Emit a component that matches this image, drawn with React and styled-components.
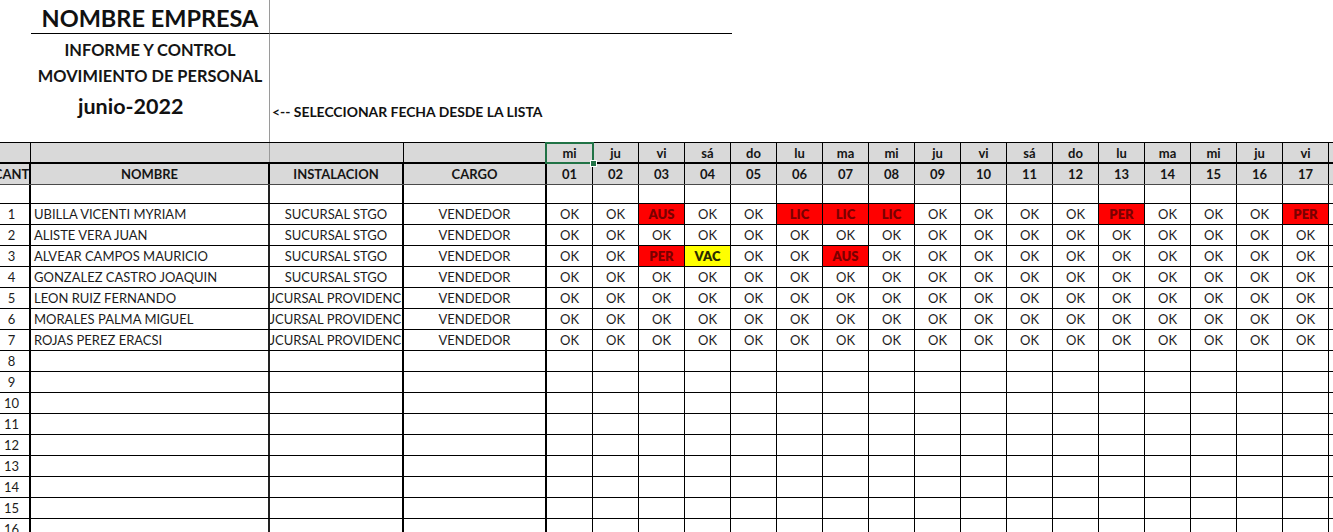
import React from 'react';
import styled, { createGlobalStyle } from 'styled-components';

const GlobalStyle = createGlobalStyle`
  html, body { margin: 0; padding: 0; background: #fff; }
  body {
    font-family: Lato, "Liberation Sans", sans-serif;
    color: #1a1a1a;
    overflow: hidden;
  }
`;

const COLS = '37px 239px 134px 143px repeat(18, 46px)';

const Page = styled.div`
  width: 1333px;
  height: 532px;
  overflow: hidden;
  background: #fff;
`;

const Canvas = styled.div`
  margin-left: -6px;
  width: max-content;
`;

/* ---------- top block ---------- */
const Top = styled.div`
  display: grid;
  grid-template-columns: 37px 239px 462px;
  grid-template-rows: 34px 28px 26px 54px;
`;

const Spacer = styled.div``;

const TitleCell = styled.div`
  box-sizing: border-box;
  border-bottom: 1px solid #000;
  border-right: 1px solid #9a9a9a;
  display: flex;
  align-items: center;
  justify-content: center;
  padding-top: 2px;
  font-weight: 700;
  font-size: 23.5px;
  color: #111;
  white-space: nowrap;
`;

const TitleLine = styled.div`
  box-sizing: border-box;
  border-bottom: 1px solid #000;
`;

const Subtitle = styled.div`
  box-sizing: border-box;
  border-right: 1px solid #9a9a9a;
  display: flex;
  align-items: center;
  justify-content: center;
  padding-top: ${p => p.$pt || 0}px;
  font-weight: 700;
  font-size: 16.4px;
  color: #151515;
  white-space: nowrap;
`;

const MonthCell = styled.div`
  box-sizing: border-box;
  border-right: 1px solid #9a9a9a;
  display: flex;
  align-items: flex-start;
  padding: 5px 0 0 47px;
  font-weight: 700;
  font-size: 21.5px;
  color: #111;
  white-space: nowrap;
`;

const Hint = styled.div`
  display: flex;
  align-items: flex-start;
  padding: 15px 0 0 2px;
  font-weight: 700;
  font-size: 13.9px;
  color: #111;
  white-space: nowrap;
`;

const Blank = styled.div``;

/* ---------- sheet ---------- */
const Row = styled.div`
  display: grid;
  grid-template-columns: ${COLS};
  height: ${p => p.$h}px;
  box-sizing: border-box;
  border-top: ${p => p.$top || 'none'};
  border-bottom: ${p => p.$bottom || '1px solid #000'};
  background: ${p => p.$bg || 'transparent'};
`;

const Cell = styled.div`
  box-sizing: border-box;
  position: relative;
  border-right: ${p => p.$rw ?? 1}px solid ${p => p.$rc || '#000'};
  display: flex;
  align-items: center;
  justify-content: center;
  overflow: hidden;
  white-space: nowrap;
  font-size: 13px;
  color: #1c1c1c;
`;

const HeadCell = styled(Cell)`
  font-weight: 700;
  color: #151515;
`;

const SelectedHead = styled(HeadCell)`
  overflow: visible;
  &::after {
    content: '';
    position: absolute;
    top: -1px;
    left: -2px;
    right: -2px;
    bottom: -2px;
    border: 2px solid #217346;
    pointer-events: none;
  }
  &::before {
    content: '';
    position: absolute;
    right: -5px;
    bottom: -5px;
    width: 5px;
    height: 5px;
    background: #217346;
    border: 1px solid #fff;
    z-index: 2;
  }
`;

const NameCell = styled(Cell)`
  justify-content: flex-start;
  padding-left: 3px;
`;

const StatusCell = styled(Cell)`
  background: ${p => (p.$kind === 'VAC' ? '#ffff00' : p.$kind === 'OK' || !p.$kind ? 'transparent' : '#ff0000')};
  color: ${p => (p.$kind === 'VAC' ? '#2a2a00' : p.$kind === 'OK' ? '#1c1c1c' : '#7a0000')};
  font-weight: ${p => (p.$kind && p.$kind !== 'OK' ? 800 : 400)};
`;

const WEEKDAYS = ['mi', 'ju', 'vi', 'sá', 'do', 'lu', 'ma', 'mi', 'ju', 'vi', 'sá', 'do', 'lu', 'ma', 'mi', 'ju', 'vi', 'sá'];
const DAYS = WEEKDAYS.map((_, i) => String(i + 1).padStart(2, '0'));

const EMPLOYEES = [
  { n: 1, name: 'UBILLA VICENTI MYRIAM', inst: 'SUCURSAL STGO', ex: { 3: 'AUS', 6: 'LIC', 7: 'LIC', 8: 'LIC', 13: 'PER', 17: 'PER' } },
  { n: 2, name: 'ALISTE VERA JUAN', inst: 'SUCURSAL STGO', ex: {} },
  { n: 3, name: 'ALVEAR CAMPOS MAURICIO', inst: 'SUCURSAL STGO', ex: { 3: 'PER', 4: 'VAC', 7: 'AUS' } },
  { n: 4, name: 'GONZALEZ CASTRO JOAQUIN', inst: 'SUCURSAL STGO', ex: {} },
  { n: 5, name: 'LEON RUIZ FERNANDO', inst: 'SUCURSAL PROVIDENCIA', ex: {} },
  { n: 6, name: 'MORALES PALMA MIGUEL', inst: 'SUCURSAL PROVIDENCIA', ex: {} },
  { n: 7, name: 'ROJAS PEREZ ERACSI', inst: 'SUCURSAL PROVIDENCIA', ex: {} },
];

const EMPTY = [8, 9, 10, 11, 12, 13, 14, 15, 16];

export default function App() {
  return (
    <Page>
      <GlobalStyle />
      <Canvas>
        <Top>
          <Spacer />
          <TitleCell>NOMBRE EMPRESA</TitleCell>
          <TitleLine />

          <Spacer />
          <Subtitle $pt={3}>INFORME Y CONTROL</Subtitle>
          <Blank />

          <Spacer />
          <Subtitle>MOVIMIENTO DE PERSONAL</Subtitle>
          <Blank />

          <Spacer />
          <MonthCell>junio-2022</MonthCell>
          <Hint>&lt;-- SELECCIONAR FECHA DESDE LA LISTA</Hint>
        </Top>

        <Row $h={22} $top="1px solid #000" $bottom="2px solid #000" $bg="#d9d9d9">
          <HeadCell />
          <HeadCell $rc="#9a9a9a" />
          <HeadCell />
          <HeadCell $rw={2} />
          {WEEKDAYS.map((d, i) =>
            i === 0 ? <SelectedHead key={i}>{d}</SelectedHead> : <HeadCell key={i}>{d}</HeadCell>
          )}
        </Row>

        <Row $h={21} $bottom="1px solid #4a4a4a" $bg="#d9d9d9">
          <HeadCell $rw={2}>CANT</HeadCell>
          <HeadCell $rw={2}>NOMBRE</HeadCell>
          <HeadCell $rw={2}>INSTALACION</HeadCell>
          <HeadCell $rw={2}>CARGO</HeadCell>
          {DAYS.map(d => (
            <HeadCell key={d}>{d}</HeadCell>
          ))}
        </Row>

        <Row $h={19}>
          <Cell $rw={2} />
          <Cell $rw={2} $rc="#222" />
          <Cell $rw={2} />
          <Cell $rw={2} />
          {DAYS.map(d => (
            <Cell key={d} />
          ))}
        </Row>

        {EMPLOYEES.map(e => (
          <Row key={e.n} $h={21}>
            <Cell $rw={2}>{e.n}</Cell>
            <NameCell $rw={2} $rc="#222">{e.name}</NameCell>
            <Cell $rw={2}>{e.inst}</Cell>
            <Cell $rw={2}>VENDEDOR</Cell>
            {DAYS.map((d, i) => {
              const kind = e.ex[i + 1] || 'OK';
              return (
                <StatusCell key={d} $kind={kind}>
                  {kind}
                </StatusCell>
              );
            })}
          </Row>
        ))}

        {EMPTY.map(n => (
          <Row key={n} $h={21}>
            <Cell $rw={2}>{n}</Cell>
            <NameCell $rw={2} $rc="#222" />
            <Cell $rw={2} />
            <Cell $rw={2} />
            {DAYS.map(d => (
              <StatusCell key={d} />
            ))}
          </Row>
        ))}
      </Canvas>
    </Page>
  );
}
